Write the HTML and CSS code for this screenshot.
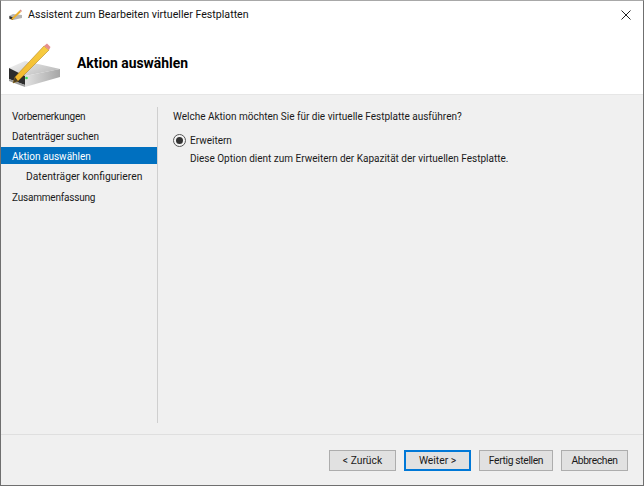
FILE: index.html
```html
<!DOCTYPE html>
<html lang="de">
<head>
<meta charset="utf-8">
<title>Assistent zum Bearbeiten virtueller Festplatten</title>
<link rel="stylesheet" href="styles.css">
</head>
<body>
<div class="window">
  <div class="titlebar">
    <svg class="title-icon" width="13" height="12" viewBox="0 0 13 12">
      <path d="M0 7 L4 5 L13 6 L13 9 L4 11 L0 10 Z" fill="#b5b5b5"/>
      <path d="M0.5 7 L4 8.5 L4 11 L0.5 9.5 Z" fill="#2b2b2b"/>
      <path d="M2 11 L3 9 L10.5 1.5 L12 3 L4 10.5 Z" fill="#eeb02a"/>
      <path d="M10.5 1.5 L11.5 .5 L13 2 L12 3 Z" fill="#d98a80"/>
    </svg>
    <span class="title-text">Assistent zum Bearbeiten virtueller Festplatten</span>
    <svg class="close-icon" width="10" height="10" viewBox="0 0 10 10">
      <path d="M0.5 0.5 L9.5 9.5 M9.5 0.5 L0.5 9.5" stroke="#222" stroke-width="1" fill="none"/>
    </svg>
  </div>
  <div class="header">
    <svg class="header-icon" width="54" height="52" viewBox="8 39 54 52">
      <defs>
        <linearGradient id="top" x1="0" y1="0" x2="1" y2="0.6">
          <stop offset="0" stop-color="#f4f4f4"/>
          <stop offset="1" stop-color="#bcbcbc"/>
        </linearGradient>
        <linearGradient id="front" x1="0" y1="0" x2="1" y2="0">
          <stop offset="0" stop-color="#e2e2e2"/>
          <stop offset="1" stop-color="#a6a6a6"/>
        </linearGradient>
        <linearGradient id="pencil" x1="0" y1="1" x2="1" y2="0">
          <stop offset="0" stop-color="#f2b52a"/>
          <stop offset="1" stop-color="#f7cf45"/>
        </linearGradient>
      </defs>
      <path d="M9 71 L25 64 L60 72 L25 79 Z" fill="url(#top)"/>
      <path d="M9 71 L25 79 L25 88 L9 82 Z" fill="#2c2c2c"/>
      <path d="M25 79 L60 72 L60 80 L25 90 Z" fill="url(#front)"/>
      <path d="M9 82 L25 88 L25 90 L9 84 Z" fill="#9a9a9a"/>
      <circle cx="26.500" cy="81" r="1.300" fill="#35d94f"/>
      <path d="M13 86 L15 80 L44 49 L49 53 L18 84 Z" fill="url(#pencil)" stroke="#a8790f" stroke-width=".5"/>
      <path d="M13 86 L15 80 L18 84 Z" fill="#4a3d24"/>
      <path d="M44 49 L47 46.500 L50.500 50 L49 53 Z" fill="#e58f8f"/>
    </svg>
    <h1 class="heading">Aktion auswählen</h1>
  </div>
  <div class="main">
    <nav class="steps">
      <div class="step condensed">Vorbemerkungen</div>
      <div class="step">Datenträger suchen</div>
      <div class="step current">Aktion auswählen</div>
      <div class="step sub">Datenträger konfigurieren</div>
      <div class="step condensed">Zusammenfassung</div>
    </nav>
    <div class="content">
      <p class="question">Welche Aktion möchten Sie für die virtuelle Festplatte ausführen?</p>
      <div class="option">
        <span class="radio"><span class="radio-dot"></span></span>
        <span>Erweitern</span>
      </div>
      <p class="option-desc">Diese Option dient zum Erweitern der Kapazität der virtuellen Festplatte.</p>
    </div>
  </div>
  <div class="footer">
    <button class="btn w67">&lt; Zurück</button>
    <button class="btn w67 default">Weiter &gt;</button>
    <button class="btn w73 tight">Fertig stellen</button>
    <button class="btn w67 tight">Abbrechen</button>
  </div>
</div>
</body>
</html>
```
FILE: styles.css
```css
* { box-sizing: border-box; }
html, body { margin: 0; padding: 0; }
body {
  width: 644px;
  height: 486px;
  overflow: hidden;
  font-family: Roboto, "Noto Sans", "Liberation Sans", sans-serif;
  font-size: 10px;
  color: #1a1a1a;
}
.window {
  width: 644px;
  height: 486px;
  display: flex;
  flex-direction: column;
  border: 1px solid #6f6f6f;
  border-top-color: #a8a8a8;
  background: #f0f0f0;
}
.titlebar {
  height: 29px;
  display: flex;
  align-items: center;
  background: #fff;
  padding: 0 10px 2px 8px;
}
.title-icon { margin-right: 6px; flex: none; }
.title-text { flex: 1; color: #111; font-size: 10.65px; }
.close-icon { margin-right: 2px; flex: none; }
.header {
  height: 65px;
  display: flex;
  align-items: center;
  background: #fff;
  padding: 0 0 0 7px;
  border-bottom: 1px solid #e6e6e6;
}
.header-icon { flex: none; margin: 0 15px 0 0; }
.heading {
  margin: 1px 0 0;
  font-size: 13.9px;
  font-weight: 700;
  color: #000;
}
.main { flex: 1; display: flex; min-height: 0; }
.steps {
  width: 156px;
  flex: none;
  padding-top: 12px;
}
.step {
  height: 20px;
  line-height: 20px;
  padding-left: 11px;
}
.step.condensed { letter-spacing: -0.2px; }
.step.current {
  background: #0070c0;
  color: #fff;
  height: 17px;
  padding-top: 2px;
  line-height: 15px;
  margin-bottom: 3px;
}
.step.sub { padding-left: 25px; font-size: 10.3px; margin-bottom: 1px; }
.content {
  flex: 1;
  margin: 12px 0 11px;
  padding: 0 0 0 15px;
  border-left: 1px solid #cfcfcf;
}
.question { margin: 3px 0 0; line-height: 14px; }
.option {
  display: flex;
  align-items: center;
  margin-top: 9px;
  height: 14px;
}
.radio {
  width: 13px;
  height: 13px;
  border: 1px solid #555;
  border-radius: 50%;
  display: flex;
  align-items: center;
  justify-content: center;
  background: #f4f4f4;
  margin-right: 4px;
  flex: none;
}
.radio-dot { width: 7px; height: 7px; border-radius: 50%; background: #333; }
.option-desc { margin: 5px 0 0 17px; line-height: 14px; }
.footer {
  height: 51px;
  flex: none;
  display: flex;
  justify-content: flex-end;
  align-items: flex-start;
  gap: 8px;
  padding: 15px 15px 0 0;
  border-top: 1px solid #dfdfdf;
}
.btn {
  height: 21px;
  padding: 0;
  font-family: inherit;
  font-size: 10.3px;
  color: #1a1a1a;
  background: #e1e1e1;
  border: 1px solid #adadad;
}
.btn.tight { letter-spacing: -0.35px; }
.w67 { width: 67px; }
.w73 { width: 74px; }
.btn.default { border: 2px solid #0078d7; }
```
